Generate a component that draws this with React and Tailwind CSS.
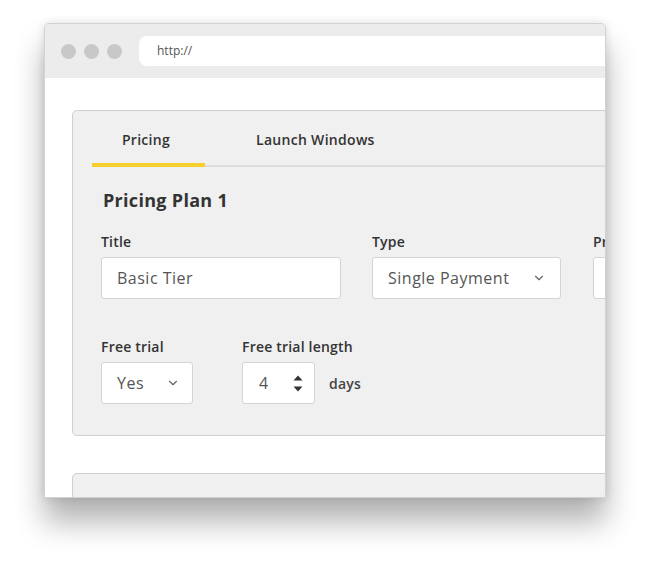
import { ChevronDown } from 'lucide-react';

const font = { fontFamily: '"Open Sans", Lato, sans-serif' };

function Label({ children }) {
  return <div className="text-[14px] font-semibold tracking-[0.2px] text-[#333] leading-none mb-[8px]">{children}</div>;
}

function Select({ value, width, pad }) {
  return (
    <div
      className={`flex items-center justify-between h-[42px] bg-white border border-[#d4d4d4] rounded-[3px] pl-[15px] ${width} ${pad}`}
    >
      <span className="text-[16px] tracking-[0.5px] text-[#555]">{value}</span>
      <ChevronDown size={14} strokeWidth={2} className="text-[#666]" />
    </div>
  );
}

function Spinner() {
  return (
    <div className="flex flex-col items-center gap-[5px]">
      <svg width="10" height="6" viewBox="0 0 10 6"><path d="M5 0.5 L9.5 5.5 L0.5 5.5 Z" fill="#333" /></svg>
      <svg width="10" height="6" viewBox="0 0 10 6"><path d="M0.5 0.5 L9.5 0.5 L5 5.5 Z" fill="#333" /></svg>
    </div>
  );
}

function TabRow({ line }) {
  return (
    <div className={`flex ml-[19px] h-[56px] pt-[3px] text-[14px] font-semibold tracking-[0.3px] text-[#333] ${line ? 'border-b-2 border-[#dcdde0]' : ''}`}>
      <div className="relative w-[113px] flex items-center justify-center pr-[5px]">
        Pricing
        {line && <div className="absolute left-0 right-0 -bottom-[2px] h-[4px] bg-[#f6cf2c]" />}
      </div>
      <div className="flex items-center ml-[51px]">Launch Windows</div>
    </div>
  );
}

function PlanCard() {
  return (
    <div className="w-[660px] h-[326px] shrink-0 bg-[#f0f0f0] border border-[#cfcfcf] rounded-[5px]">
      <TabRow line />
      <div className="pl-[28px] pt-[24px]">
        <h2 className="pl-[2px] text-[18px] font-bold tracking-[0.3px] text-[#333] leading-none">Pricing Plan 1</h2>
        <div className="flex mt-[26px]">
          <div className="w-[271px]">
            <Label>Title</Label>
            <div className="flex items-center h-[42px] w-[240px] bg-white border border-[#d4d4d4] rounded-[3px] pl-[15px] text-[16px] tracking-[0.5px] text-[#555]">
              Basic Tier
            </div>
          </div>
          <div className="w-[221px]">
            <Label>Type</Label>
            <Select value="Single Payment" width="w-[189px]" pad="pr-[14px]" />
          </div>
          <div>
            <Label>Price</Label>
            <div className="h-[42px] w-[120px] bg-white border border-[#d4d4d4] rounded-[3px]" />
          </div>
        </div>
        <div className="flex mt-[41px]">
          <div className="w-[141px]">
            <Label>Free trial</Label>
            <Select value="Yes" width="w-[92px]" pad="pr-[12px]" />
          </div>
          <div>
            <Label>Free trial length</Label>
            <div className="flex items-center">
              <div className="flex items-center justify-between h-[42px] w-[73px] bg-white border border-[#d4d4d4] rounded-[3px] pl-[16px] pr-[11px]">
                <span className="text-[16px] text-[#555]">4</span>
                <Spinner />
              </div>
              <span className="ml-[14px] text-[14px] font-semibold tracking-[0.2px] text-[#444]">days</span>
            </div>
          </div>
        </div>
      </div>
    </div>
  );
}

export default function App() {
  return (
    <div className="w-[648px] h-[566px] bg-white pl-[44px] pt-[23px]" style={font}>
      <div className="w-[562px] h-[475px] flex flex-col overflow-hidden bg-white border border-[#d2d2d2] rounded-t-[5px] shadow-[0_0_10px_rgba(0,0,0,0.12),0_24px_30px_rgba(0,0,0,0.3)]">
        <div className="h-[54px] shrink-0 bg-[#ececec] flex items-center pl-[16px]">
          <div className="flex gap-[8px]">
            <div className="w-[15px] h-[15px] rounded-full bg-[#c8c8c8]" />
            <div className="w-[15px] h-[15px] rounded-full bg-[#c8c8c8]" />
            <div className="w-[15px] h-[15px] rounded-full bg-[#c8c8c8]" />
          </div>
          <div className="ml-[17px] flex-1 h-[30px] bg-white rounded-l-[8px] flex items-center pl-[18px] text-[12px] text-[#555]">
            http://
          </div>
        </div>
        <div className="flex flex-col pl-[27px] pt-[32px] gap-[37px]">
          <PlanCard />
          <div className="w-[660px] h-[120px] shrink-0 bg-[#f0f0f0] border border-[#cfcfcf] rounded-[5px]">
            <TabRow />
          </div>
        </div>
      </div>
    </div>
  );
}
